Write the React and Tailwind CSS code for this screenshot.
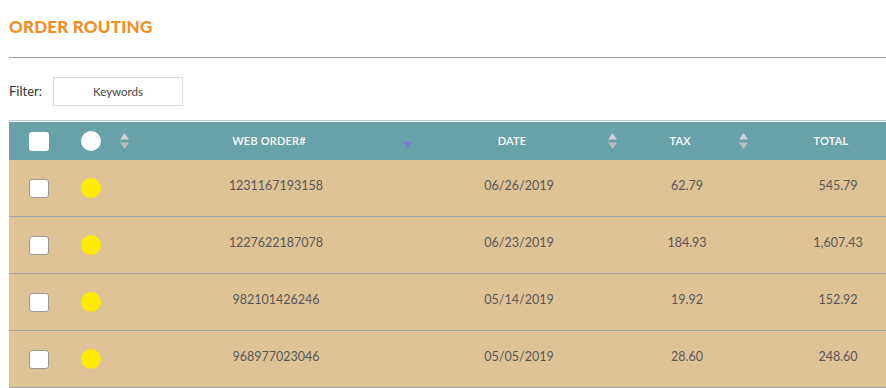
import React from 'react';

const orders = [
  { id: '1231167193158', date: '06/26/2019', tax: '62.79', total: '545.79' },
  { id: '1227622187078', date: '06/23/2019', tax: '184.93', total: '1,607.43' },
  { id: '982101426246', date: '05/14/2019', tax: '19.92', total: '152.92' },
  { id: '968977023046', date: '05/05/2019', tax: '28.60', total: '248.60' },
];

const cols = 'grid grid-cols-[56px_75px_272px_214px_122px_180px]';

const SortIcon = () => (
  <svg width="9" height="16" viewBox="0 0 9 16">
    <polygon points="4.5,0 9,6.5 0,6.5" fill="#d2d2d2" />
    <polygon points="0,9.5 9,9.5 4.5,16" fill="#bdbdbd" />
  </svg>
);

const SortDown = () => (
  <svg width="9" height="7" viewBox="0 0 9 7">
    <polygon points="0,0 9,0 4.5,7" fill="#7a78d8" />
  </svg>
);

const HeadCell = ({ label, icon, iconClass }) => (
  <div className="relative flex items-center justify-center pr-[14px]">
    <span>{label}</span>
    {icon && <span className={`absolute top-1/2 -translate-y-1/2 flex ${iconClass}`}>{icon}</span>}
  </div>
);

const App = () => {
  return (
    <div className="w-[886px] h-[388px] overflow-hidden bg-white font-['Lato',sans-serif]">
      <div className="pl-[9px]">
        <h1 className="pt-[16px] text-[17px] leading-[21px] font-black tracking-[0.2px] text-[#f68d1f]">
          ORDER ROUTING
        </h1>
        <div className="mt-[20px] border-t border-[#9e9e9e]" />

        {/* Filter */}
        <div className="mt-[19px] flex items-center">
          <span className="w-[44px] text-[13px] text-[#333]">Filter:</span>
          <div className="w-[130px] h-[29px] border border-[#dddddd] flex items-center justify-center text-[11.5px] text-[#444]">
            Keywords
          </div>
        </div>

        {/* Table */}
        <div className="mt-[14px] w-[919px] border-t border-[#a9cbd2]">
          <div className={`${cols} mt-px h-[38px] bg-[#69a1ab] text-white text-[11px] font-semibold tracking-[0.2px]`}>
            <div className="flex items-center pl-[20px]">
              <div className="w-[20px] h-[19px] rounded-[3px] bg-white" />
            </div>
            <div className="flex items-center pl-[16px] gap-[19px]">
              <div className="w-[20px] h-[20px] rounded-full bg-white" />
              <SortIcon />
            </div>
            <HeadCell label="WEB ORDER#" icon={<SortDown />} iconClass="right-0 mt-[4px]" />
            <HeadCell label="DATE" icon={<SortIcon />} iconClass="right-[9px]" />
            <HeadCell label="TAX" icon={<SortIcon />} iconClass="right-0" />
            <HeadCell label="TOTAL" icon={<SortIcon />} iconClass="right-0" />
          </div>

          {orders.map((o) => (
            <div
              key={o.id}
              className={`${cols} h-[57px] bg-[#dfc296] border-b border-[#9fa4a8] text-[12.5px] text-[#585858]`}
            >
              <div className="flex items-center pl-[20px]">
                <div className="w-[20px] h-[19px] rounded-[3px] bg-white border border-[#9a9a9a]" />
              </div>
              <div className="flex items-center pl-[16px]">
                <div className="w-[20px] h-[20px] rounded-full bg-[#ffeb00]" />
              </div>
              <div className="flex items-center justify-center pb-[3px]">{o.id}</div>
              <div className="flex items-center justify-center pb-[3px]">{o.date}</div>
              <div className="flex items-center justify-center pb-[3px]">{o.tax}</div>
              <div className="flex items-center justify-center pb-[3px]">{o.total}</div>
            </div>
          ))}
        </div>
      </div>
    </div>
  );
};

export default App;
